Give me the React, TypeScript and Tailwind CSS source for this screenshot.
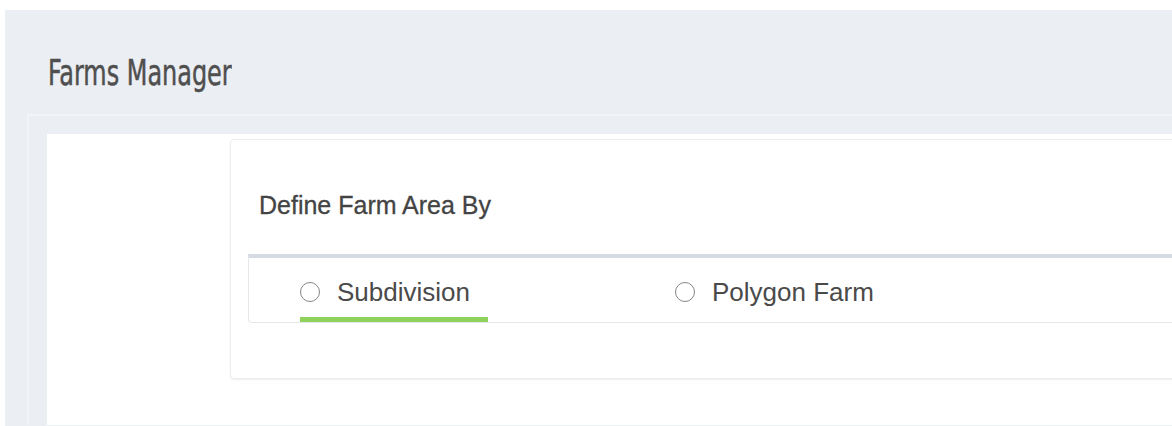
import { useState } from "react";

type AreaMode = "subdivision" | "polygon";

const MODES: { id: AreaMode; label: string }[] = [
  { id: "subdivision", label: "Subdivision" },
  { id: "polygon", label: "Polygon Farm" },
];

function RadioTab({
  label,
  active,
  onSelect,
}: {
  label: string;
  active: boolean;
  onSelect: () => void;
}) {
  return (
    <button
      type="button"
      onClick={onSelect}
      className={`box-border flex h-[64px] w-[188px] shrink-0 items-start border-b-[5px] pt-[24px] text-left ${
        active ? "border-[#8ed15b]" : "border-transparent"
      }`}
    >
      <span className="flex items-center">
        <span className="box-border block h-[20px] w-[20px] shrink-0 rounded-full border-[1.5px] border-[#858585] bg-white" />
        <span className="ml-[17px] whitespace-nowrap text-[26px] leading-[20px] text-[#4a4a4a]">
          {label}
        </span>
      </span>
    </button>
  );
}

export default function App() {
  const [mode, setMode] = useState<AreaMode>("subdivision");

  return (
    <div
      className="min-h-screen overflow-hidden bg-white pl-[5px] pt-[10px]"
      style={{ fontFamily: '"Liberation Sans", Arial, sans-serif' }}
    >
      <div className="min-h-[416px] bg-[#ebeef2]">
        {/* page header, condensed display title */}
        <div className="h-[104px] pl-[43px] pt-[43px]">
          <h1
            className="origin-left scale-x-[0.76] whitespace-nowrap text-[35px] leading-[40px] text-[#4f4f4f] [-webkit-text-stroke:0.5px_#4f4f4f]"
            style={{ fontFamily: '"DejaVu Sans Condensed", "DejaVu Sans", sans-serif' }}
          >
            Farms Manager
          </h1>
        </div>

        {/* content panel */}
        <div className="ml-[22px] border-l-2 border-t-2 border-[#f2f4f7] pl-[18px] pt-[18px]">
          <div className="flex min-h-[291px] overflow-hidden bg-white pt-[5px]">
            <div className="w-[183px] shrink-0" />
            <div className="-mr-[20px] h-[240px] flex-1 rounded-[4px] border border-[#ececec] pl-[17px] pt-[50px] shadow-[0_1px_2px_rgba(0,0,0,0.07)]">
              <div className="ml-[11px] text-[25px] leading-[30px] text-[#444444] [-webkit-text-stroke:0.3px_#444444]">
                Define Farm Area By
              </div>
              <div className="mt-[34px] rounded-b-[4px] border border-t-4 border-[#e6e7ea] border-t-[#d6dbe3]">
                <div className="flex gap-[187px] pl-[51px]">
                  {MODES.map((m) => (
                    <RadioTab
                      key={m.id}
                      label={m.label}
                      active={mode === m.id}
                      onSelect={() => setMode(m.id)}
                    />
                  ))}
                </div>
              </div>
            </div>
          </div>
        </div>
      </div>
    </div>
  );
}
